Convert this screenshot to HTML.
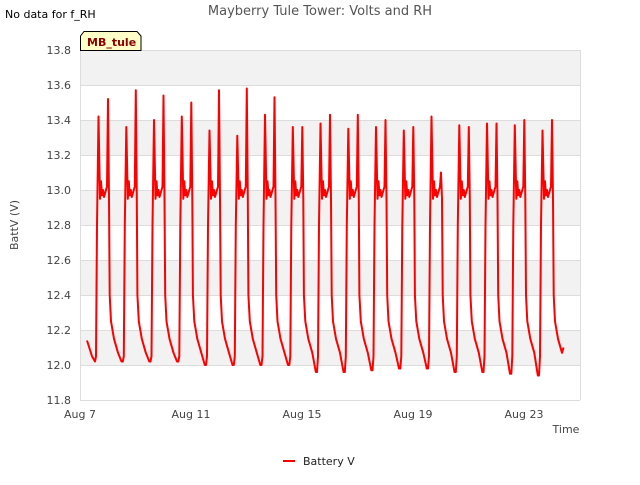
<!DOCTYPE html>
<html><head><meta charset="utf-8"><style>
body{margin:0;width:640px;height:480px;background:#fff;font-family:"Liberation Sans","DejaVu Sans",sans-serif;overflow:hidden}
</style></head><body>
<svg id="s" width="640" height="480" xmlns="http://www.w3.org/2000/svg" font-family="DejaVu Sans, Liberation Sans, sans-serif">
<rect x="80" y="50" width="500" height="35" fill="#f2f2f2"/>
<rect x="80" y="120" width="500" height="35" fill="#f2f2f2"/>
<rect x="80" y="190" width="500" height="35" fill="#f2f2f2"/>
<rect x="80" y="260" width="500" height="35" fill="#f2f2f2"/>
<rect x="80" y="330" width="500" height="35" fill="#f2f2f2"/>
<g stroke="#dcdcdc" stroke-width="1">
<line x1="80" x2="580" y1="50.5" y2="50.5"/><line x1="80" x2="580" y1="85.5" y2="85.5"/>
<line x1="80" x2="580" y1="120.5" y2="120.5"/><line x1="80" x2="580" y1="155.5" y2="155.5"/>
<line x1="80" x2="580" y1="190.5" y2="190.5"/><line x1="80" x2="580" y1="225.5" y2="225.5"/>
<line x1="80" x2="580" y1="260.5" y2="260.5"/><line x1="80" x2="580" y1="295.5" y2="295.5"/>
<line x1="80" x2="580" y1="330.5" y2="330.5"/><line x1="80" x2="580" y1="365.5" y2="365.5"/>
<line x1="80" x2="580" y1="400.5" y2="400.5"/>
<line x1="80.5" x2="80.5" y1="50" y2="400"/><line x1="580.5" x2="580.5" y1="50" y2="400"/>
</g>
<g font-size="11" fill="#444" text-anchor="end">
<text x="71" y="54">13.8</text><text x="71" y="89">13.6</text><text x="71" y="124">13.4</text>
<text x="71" y="159">13.2</text><text x="71" y="194">13.0</text><text x="71" y="229">12.8</text>
<text x="71" y="264">12.6</text><text x="71" y="299">12.4</text><text x="71" y="334">12.2</text>
<text x="71" y="369">12.0</text><text x="71" y="404">11.8</text>
</g>
<g font-size="11" fill="#444" text-anchor="middle">
<text x="80" y="418">Aug 7</text><text x="191" y="418">Aug 11</text><text x="302" y="418">Aug 15</text>
<text x="413" y="418">Aug 19</text><text x="524" y="418">Aug 23</text>
</g>
<text x="566" y="433" font-size="11" fill="#444" text-anchor="middle">Time</text>
<text transform="translate(18,225) rotate(-90)" font-size="11" fill="#444" text-anchor="middle">BattV (V)</text>
<text x="320" y="15" font-size="13" fill="#555" text-anchor="middle">Mayberry Tule Tower: Volts and RH</text>
<text x="5" y="18" font-size="11" fill="#000">No data for f_RH</text>
<path d="M80.5,50.5 L80.5,36 L84,31.5 L137,31.5 L141,36 L141,50.5 Z" fill="#ffffc8" stroke="#000" stroke-width="1"/>
<text x="87" y="46" font-size="11" font-weight="bold" fill="#8b0000">MB_tule</text>
<path id="p" fill="none" stroke="#ff0000" stroke-width="2" stroke-linejoin="round"/>
<line x1="283" x2="295" y1="461" y2="461" stroke="#ff0000" stroke-width="2"/>
<text x="303" y="465" font-size="11" fill="#222">Battery V</text>
</svg>
<script>
var p1=[13.42,13.36,13.40,13.42,13.34,13.31,13.43,13.36,13.38,13.35,13.36,13.34,13.42,13.37,13.38,13.37,13.34];
var p2=[13.52,13.57,13.54,13.50,13.57,13.58,13.53,13.36,13.43,13.43,13.40,13.36,13.10,13.36,13.38,13.40,13.40];
var mn=[12.02,12.02,12.02,12.02,12.0,12.0,12.0,12.0,11.96,11.96,11.97,11.98,11.98,11.96,11.96,11.95,11.94];
function Y(v){return 50+(13.8-v)*175;}
var d="M87,"+Y(12.14)+" L92,"+Y(12.05)+" ";
for(var k=0;k<17;k++){
 var x0=95+27.75*k,m=mn[k];
 var pts=[[0,m],[1,12.05],[2,12.8],[3.5,p1[k]],[5,12.95],[6,13.05],[7,12.97],[8,13.0],[9,12.96],[11,13.0],[12,13.02],[13,p2[k]],[14,12.95],[14.7,12.4],[16,12.25],[19,12.15],[23,12.07]];
 if(k<16){pts.push([26.5,mn[k+1]]);}else{pts.push([24.5,12.1]);}
 pts.forEach(function(q){d+="L"+(x0+q[0]).toFixed(1)+","+Y(q[1]).toFixed(1)+" ";});
}
document.getElementById("p").setAttribute("d",d);
</script>
</body></html>
